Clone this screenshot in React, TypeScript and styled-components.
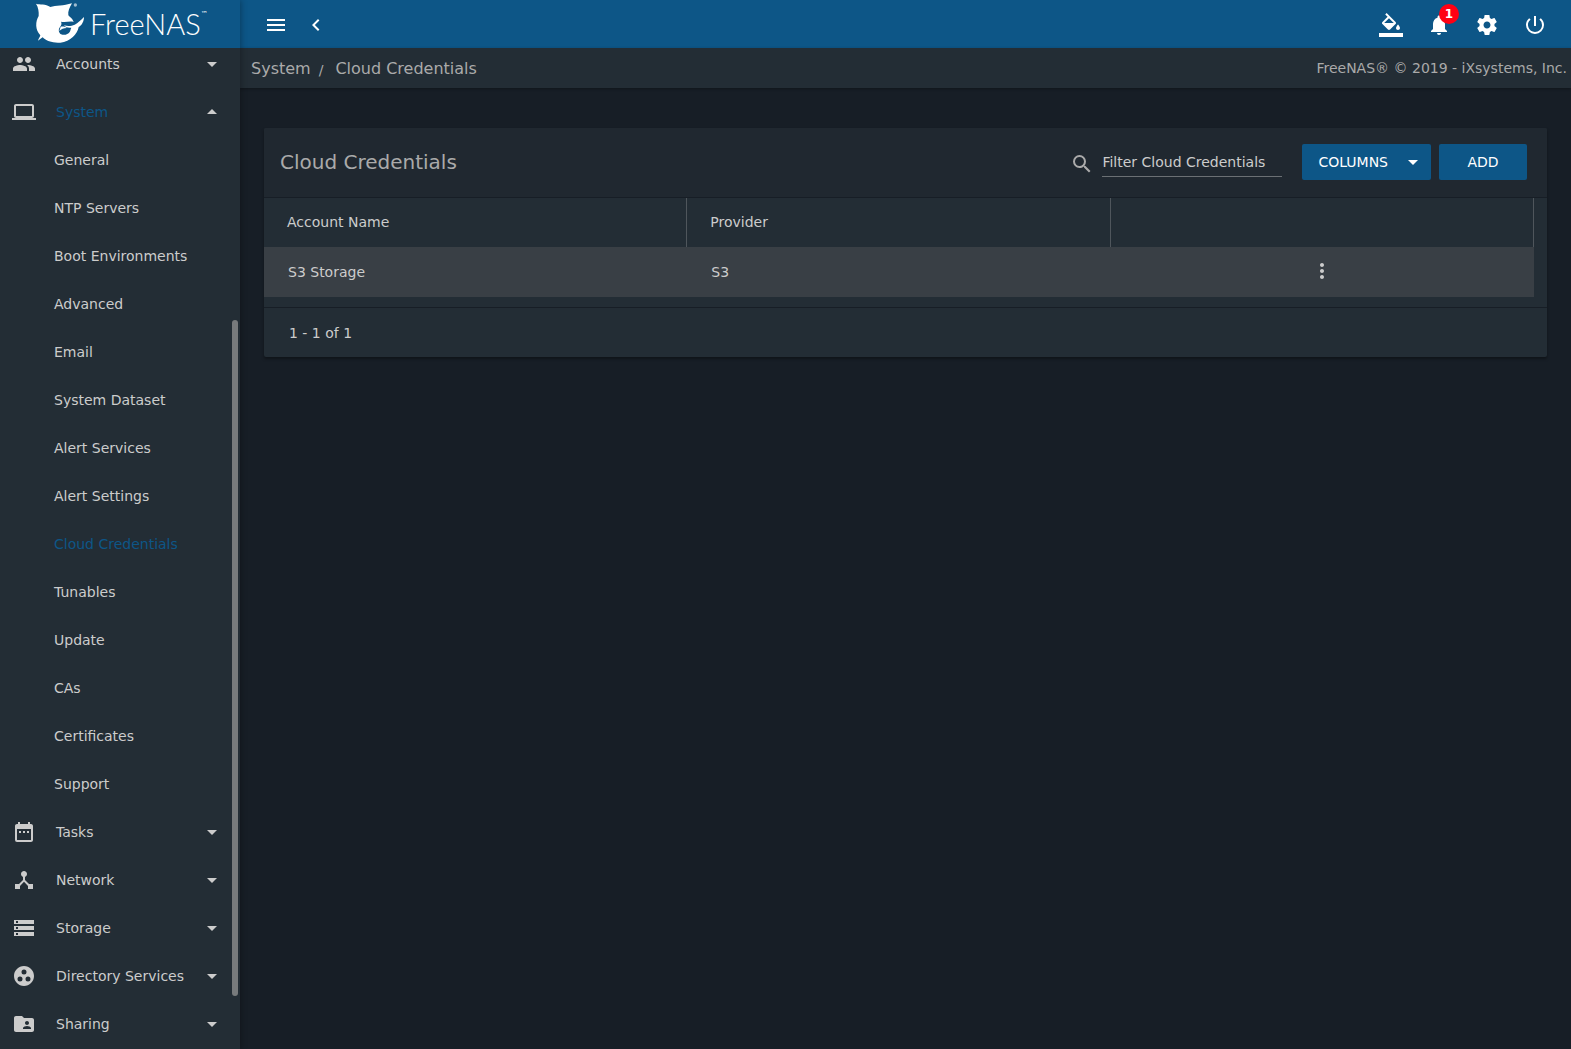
import React from "react";
import styled, { createGlobalStyle } from "styled-components";
import {
  MdArrowDropDown,
  MdArrowDropUp,
  MdChevronLeft,
  MdDateRange,
  MdDeviceHub,
  MdFolderShared,
  MdGroupWork,
  MdLaptop,
  MdMenu,
  MdMoreVert,
  MdNotifications,
  MdPeople,
  MdPowerSettingsNew,
  MdSearch,
  MdStorage,
} from "react-icons/md";
import type { IconType } from "react-icons";

const color = {
  primary: "#0d5687",
  bg: "#171e26",
  panel: "#232d35",
  toolbar: "#202830",
  hover: "#393f45",
  text: "#cccccc",
  muted: "#aaaaaa",
  line: "#4f565c",
};

const GlobalStyle = createGlobalStyle`
  * { box-sizing: border-box; }
  body {
    margin: 0;
    background: ${color.bg};
    color: ${color.text};
    font: 14px/20px "DejaVu Sans", Verdana, sans-serif;
  }
  button, input { font: inherit; color: inherit; }
`;

const Shell = styled.div`
  display: grid;
  grid-template-columns: 240px minmax(0, 1fr);
  height: 100vh;
  overflow: hidden;
`;

const Sidebar = styled.aside`
  position: relative;
  z-index: 1;
  display: flex;
  flex-direction: column;
  min-height: 0;
  background: ${color.panel};
  box-shadow: 1px 0 6px rgba(0, 0, 0, 0.3);
`;

const Brand = styled.a`
  display: flex;
  flex: none;
  align-items: center;
  height: 48px;
  padding-left: 34px;
  background: ${color.primary};
  color: #fff;
  text-decoration: none;
`;

const BrandName = styled.span`
  margin-left: 4px;
  font: 300 29px/46px Lato, sans-serif;
`;

const Trademark = styled.span`
  align-self: flex-start;
  padding-top: 10px;
  font: 7px/8px "DejaVu Sans", sans-serif;
`;

const Nav = styled.nav`
  flex: 1;
  min-height: 0;
  overflow: hidden;
`;

const NavList = styled.ul`
  margin: -8px 0 0;
  padding: 0;
  list-style: none;
`;

const SubList = styled.ul`
  margin: 0;
  padding: 0;
  list-style: none;
`;

const NavButton = styled.button<{ $active?: boolean }>`
  display: flex;
  align-items: center;
  width: 100%;
  height: 48px;
  padding: 0 16px 0 12px;
  border: 0;
  background: none;
  color: ${(p) => (p.$active ? color.primary : color.text)};
  text-align: left;
  cursor: pointer;

  svg { flex: none; color: ${color.text}; }
`;

const NavLabel = styled.span`
  flex: 1;
  padding-left: 20px;
`;

const SubLink = styled.a<{ $active?: boolean }>`
  display: flex;
  align-items: center;
  height: 48px;
  padding-left: 54px;
  color: ${(p) => (p.$active ? color.primary : color.text)};
  text-decoration: none;
`;

const ScrollThumb = styled.div`
  position: absolute;
  top: 320px;
  right: 2px;
  bottom: 53px;
  width: 6px;
  border-radius: 6px;
  background: #777a7c;
`;

const Content = styled.div`
  display: flex;
  flex-direction: column;
  min-width: 0;
`;

const TopBar = styled.header`
  display: flex;
  flex: none;
  align-items: center;
  justify-content: space-between;
  height: 48px;
  padding: 0 16px;
  background: ${color.primary};
  color: #fff;
`;

const BarGroup = styled.div<{ $gap: number }>`
  display: flex;
  gap: ${(p) => p.$gap}px;
  padding-top: 2px;
`;

const IconButton = styled.button`
  position: relative;
  display: flex;
  align-items: center;
  justify-content: center;
  width: 40px;
  height: 40px;
  padding: 0;
  border: 0;
  background: none;
  cursor: pointer;
`;

const Badge = styled.span`
  position: absolute;
  top: -1px;
  right: 0;
  width: 20px;
  height: 20px;
  border-radius: 50%;
  background: #ff0013;
  color: #fff;
  font-size: 12px;
  font-weight: 700;
  text-align: center;
`;

const CrumbBar = styled.div`
  display: flex;
  flex: none;
  align-items: center;
  justify-content: space-between;
  height: 40px;
  padding: 0 4px 0 11px;
  background: ${color.panel};
  color: ${color.muted};
  box-shadow: 0 1px 3px rgba(0, 0, 0, 0.3);
`;

const Crumbs = styled.nav`
  display: flex;
  align-items: center;
  padding-top: 2px;
  font-size: 16px;

  a { color: inherit; text-decoration: none; }
`;

const Slash = styled.span`
  padding: 2px 12px 0 8px;
  font-size: 14px;
`;

const Main = styled.main`
  flex: 1;
  padding: 40px 24px;
`;

const Card = styled.section`
  overflow: hidden;
  border-radius: 2px;
  background: ${color.panel};
  box-shadow: 0 2px 3px rgba(0, 0, 0, 0.35);
`;

const Toolbar = styled.div`
  display: flex;
  align-items: center;
  height: 70px;
  padding: 0 20px 2px 16px;
  border-bottom: 1px solid ${color.bg};
  background: ${color.toolbar};
`;

const Title = styled.h1`
  flex: 1;
  margin: 0;
  color: ${color.muted};
  font-size: 20px;
  font-weight: 400;
  line-height: 24px;
`;

const Filter = styled.label`
  display: flex;
  align-items: center;
  gap: 8px;
  margin-right: 20px;
  color: ${color.muted};

  svg { margin-top: 4px; }
`;

const FilterInput = styled.input`
  width: 180px;
  height: 30px;
  padding: 2px 0 0;
  border: 0;
  border-bottom: 1px solid #6b7074;
  outline: 0;
  background: none;

  &::placeholder { color: ${color.text}; opacity: 1; }
`;

const Actions = styled.div`
  display: flex;
  gap: 8px;
`;

const ActionButton = styled.button`
  display: flex;
  align-items: center;
  justify-content: center;
  min-width: 88px;
  height: 36px;
  padding: 0 6px 0 16px;
  border: 0;
  border-radius: 2px;
  background: ${color.primary};
  color: #fff;
  cursor: pointer;

  &:last-child { padding: 0 16px; }
  svg { margin-left: 13px; }
`;

const Table = styled.table`
  width: calc(100% - 13px);
  table-layout: fixed;
  border-collapse: separate;
  border-spacing: 0;
  text-align: left;
`;

const HeadCell = styled.th`
  height: 49px;
  padding: 0 23px 2px;
  border-right: 1px solid ${color.line};
  font-weight: 400;
`;

const Cell = styled.td`
  height: 50px;
  padding: 0 24px;
  background: ${color.hover};
`;

const MenuButton = styled(IconButton)`
  margin: 0 auto;
  padding-bottom: 2px;
`;

const Footer = styled.div`
  display: flex;
  align-items: center;
  height: 50px;
  margin-top: 10px;
  padding: 0 25px;
  border-top: 1px solid ${color.bg};
`;

const sections: { label: string; icon: IconType; children?: string[] }[] = [
  { label: "Accounts", icon: MdPeople },
  {
    label: "System",
    icon: MdLaptop,
    children: [
      "General",
      "NTP Servers",
      "Boot Environments",
      "Advanced",
      "Email",
      "System Dataset",
      "Alert Services",
      "Alert Settings",
      "Cloud Credentials",
      "Tunables",
      "Update",
      "CAs",
      "Certificates",
      "Support",
    ],
  },
  { label: "Tasks", icon: MdDateRange },
  { label: "Network", icon: MdDeviceHub },
  { label: "Storage", icon: MdStorage },
  { label: "Directory Services", icon: MdGroupWork },
  { label: "Sharing", icon: MdFolderShared },
];

const SharkLogo = () => (
  <svg width="52" height="48" viewBox="12 0 156 144" fill="#fff" aria-hidden="true">
    <path d="M18 11C30 15 46 10 61 21C78 16 100 18 126 10C119 22 113 34 115 46C120 52 128 56 131 66C120 62 108 68 93 65C96 70 94 76 90 81C84 88 86 98 93 103C104 107 114 103 119 96C122 92 121 88 124 83C114 85 106 82 102 76C112 79 124 79 134 74C144 69 153 60 162 51C162 63 156 76 146 81C142 102 122 125 91 128C69 130 49 123 38 112C33 116 28 119 24 122C26 115 30 112 31 106C15 89 16 65 26 48C27 35 25 22 18 11Z" />
    <path d="M92 80C99 79 105 80 111 84C101 84 94 87 88 93Z" />
    <circle cx="136" cy="15" r="5" opacity="0.6" />
  </svg>
);

const FillIcon = () => (
  <svg width="24" height="24" viewBox="0 0 24 24" fill="currentColor" aria-hidden="true">
    <path d="M16.56 8.94L7.62 0 6.21 1.41l2.38 2.38-5.15 5.15c-.59.59-.59 1.54 0 2.12l5.5 5.5c.29.29.68.44 1.06.44s.77-.15 1.06-.44l5.5-5.5c.59-.58.59-1.53 0-2.12zM5.21 10L10 5.21 14.79 10H5.21zM19 11.5s-2 2.17-2 3.5c0 1.1.9 2 2 2s2-.9 2-2c0-1.33-2-3.5-2-3.5zM0 20h24v4H0z" />
  </svg>
);

const GearIcon = () => (
  <svg width="24" height="24" viewBox="0 0 24 24" fill="currentColor" aria-hidden="true">
    <path d="M19.43 12.98c.04-.32.07-.64.07-.98s-.03-.66-.07-.98l2.11-1.65c.19-.15.24-.42.12-.64l-2-3.46c-.12-.22-.39-.3-.61-.22l-2.49 1c-.52-.4-1.08-.73-1.69-.98l-.38-2.65C14.46 2.18 14.25 2 14 2h-4c-.25 0-.46.18-.49.42l-.38 2.65c-.61.25-1.17.59-1.69.98l-2.49-1c-.23-.09-.49 0-.61.22l-2 3.46c-.13.22-.07.49.12.64l2.11 1.65c-.04.32-.07.65-.07.98s.03.66.07.98l-2.11 1.65c-.19.15-.24.42-.12.64l2 3.46c.12.22.39.3.61.22l2.49-1c.52.4 1.08.73 1.69.98l.38 2.65c.03.24.24.42.49.42h4c.25 0 .46-.18.49-.42l.38-2.65c.61-.25 1.17-.59 1.69-.98l2.49 1c.23.09.49 0 .61-.22l2-3.46c.12-.22.07-.49-.12-.64l-2.11-1.65zM12 15.5c-1.93 0-3.5-1.57-3.5-3.5s1.57-3.5 3.5-3.5 3.5 1.57 3.5 3.5-1.57 3.5-3.5 3.5z" />
  </svg>
);

export default function App() {
  return (
    <>
      <GlobalStyle />
      <Shell>
        <Sidebar>
          <Brand href="#">
            <SharkLogo />
            <BrandName>FreeNAS</BrandName>
            <Trademark>™</Trademark>
          </Brand>
          <Nav aria-label="Main">
            <NavList>
              {sections.map(({ label, icon: Icon, children }) => (
                <li key={label}>
                  <NavButton $active={!!children} aria-expanded={!!children}>
                    <Icon size={24} />
                    <NavLabel>{label}</NavLabel>
                    {children ? <MdArrowDropUp size={24} /> : <MdArrowDropDown size={24} />}
                  </NavButton>
                  {children && (
                    <SubList>
                      {children.map((item) => (
                        <li key={item}>
                          <SubLink href="#" $active={item === "Cloud Credentials"}>
                            {item}
                          </SubLink>
                        </li>
                      ))}
                    </SubList>
                  )}
                </li>
              ))}
            </NavList>
          </Nav>
          <ScrollThumb />
        </Sidebar>

        <Content>
          <TopBar>
            <BarGroup $gap={0}>
              <IconButton aria-label="Toggle menu">
                <MdMenu size={24} />
              </IconButton>
              <IconButton aria-label="Collapse menu">
                <MdChevronLeft size={24} />
              </IconButton>
            </BarGroup>
            <BarGroup $gap={8}>
              <IconButton aria-label="Theme">
                <FillIcon />
              </IconButton>
              <IconButton aria-label="Notifications">
                <MdNotifications size={24} />
                <Badge>1</Badge>
              </IconButton>
              <IconButton aria-label="Settings">
                <GearIcon />
              </IconButton>
              <IconButton aria-label="Power">
                <MdPowerSettingsNew size={24} />
              </IconButton>
            </BarGroup>
          </TopBar>

          <CrumbBar>
            <Crumbs aria-label="Breadcrumb">
              <a href="#">System</a>
              <Slash>/</Slash>
              <a href="#">Cloud Credentials</a>
            </Crumbs>
            <span>FreeNAS® © 2019 - iXsystems, Inc.</span>
          </CrumbBar>

          <Main>
            <Card>
              <Toolbar>
                <Title>Cloud Credentials</Title>
                <Filter>
                  <MdSearch size={24} />
                  <FilterInput
                    type="text"
                    aria-label="Filter Cloud Credentials"
                    placeholder="Filter Cloud Credentials"
                  />
                </Filter>
                <Actions>
                  <ActionButton>
                    COLUMNS
                    <MdArrowDropDown size={24} />
                  </ActionButton>
                  <ActionButton>ADD</ActionButton>
                </Actions>
              </Toolbar>
              <Table>
                <thead>
                  <tr>
                    <HeadCell>Account Name</HeadCell>
                    <HeadCell>Provider</HeadCell>
                    <HeadCell aria-label="Actions" />
                  </tr>
                </thead>
                <tbody>
                  <tr>
                    <Cell>S3 Storage</Cell>
                    <Cell>S3</Cell>
                    <Cell>
                      <MenuButton aria-label="Row actions">
                        <MdMoreVert size={24} />
                      </MenuButton>
                    </Cell>
                  </tr>
                </tbody>
              </Table>
              <Footer>1 - 1 of 1</Footer>
            </Card>
          </Main>
        </Content>
      </Shell>
    </>
  );
}
